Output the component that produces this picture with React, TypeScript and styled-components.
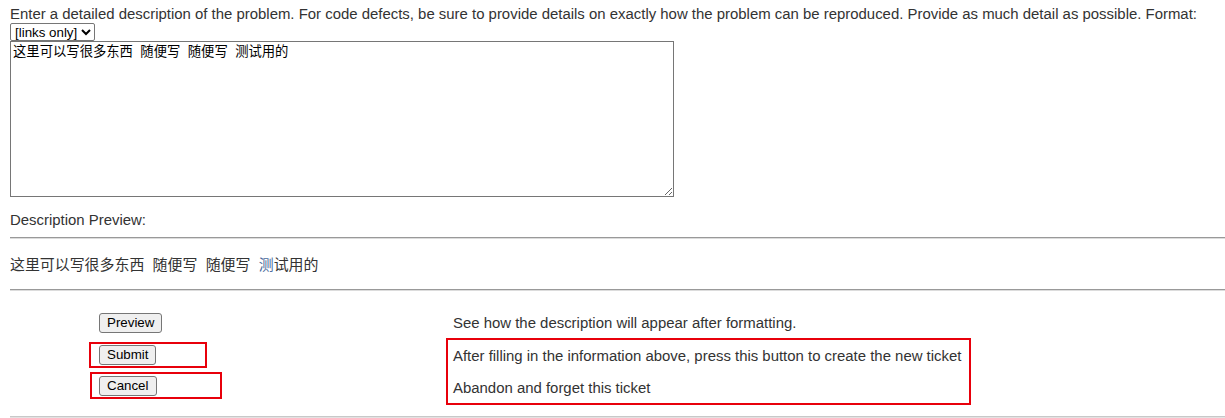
import React from 'react';
import styled, { createGlobalStyle } from 'styled-components';

const GlobalStyle = createGlobalStyle`
  html, body {
    margin: 0;
    padding: 0;
    background: #fff;
  }
  body {
    font-family: 'Liberation Sans', Arial, 'Noto Sans CJK SC', sans-serif;
    color: #333;
    font-size: 14.93px;
  }
`;

const Page = styled.div`
  padding: 5px 0 0 10px;
`;

const Intro = styled.div`
  line-height: 18px;
  white-space: nowrap;
`;

const FormatSelect = styled.select`
  display: block;
  height: 18px;
  font-family: 'Liberation Sans', Arial, sans-serif;
  font-size: 13.33px;
  color: #000;
  padding: 0;
  border: 1px solid #767676;
  border-radius: 2px;
  background: #fff;
`;

const DescriptionArea = styled.textarea`
  display: block;
  box-sizing: border-box;
  width: 664px;
  height: 156px;
  margin: 0;
  padding: 2px 2px;
  font-family: 'Liberation Sans', Arial, 'Noto Sans CJK SC', sans-serif;
  font-size: 13.33px;
  line-height: 16px;
  color: #000;
  border: 1px solid #767676;
  resize: both;
`;

const Label = styled.div`
  margin-top: 14px;
  margin-bottom: 8px;
  line-height: 18px;
`;

const Rule = styled.div<{ $light?: boolean }>`
  height: 0;
  border-top: 1px solid ${(p) => (p.$light ? '#c8c8c8' : '#999')};
  border-bottom: 1px solid ${(p) => (p.$light ? '#e2e2e2' : '#dcdcdc')};
`;

const PreviewText = styled.div`
  padding: 17px 0 15px;
  line-height: 18px;
`;

const Tinted = styled.span`
  color: #4a6a9c;
`;

const Actions = styled.div`
  display: grid;
  grid-template-columns: 436px auto;
  padding-top: 15px;
  padding-bottom: 11px;
`;

const ButtonCol = styled.div`
  display: flex;
  flex-direction: column;
`;

const InfoCol = styled.div`
  display: flex;
  flex-direction: column;
`;

const PlainCell = styled.div`
  height: 33px;
  display: flex;
  align-items: center;
  padding-left: 89px;
`;

const Marked = styled.div<{ $width: number; $height: number; $shift: number; $top: number }>`
  box-sizing: border-box;
  width: ${(p) => p.$width}px;
  height: ${(p) => p.$height}px;
  margin-left: ${(p) => p.$shift}px;
  margin-top: ${(p) => p.$top}px;
  border: 2px solid #e8000b;
  display: flex;
  align-items: center;
  padding-left: ${(p) => 87 - p.$shift}px;
`;

const Button = styled.button`
  font-family: 'Liberation Sans', Arial, sans-serif;
  font-size: 13.33px;
  color: #000;
  height: 20px;
  padding: 0 7px;
  background: #efefef;
  border: 1px solid #767676;
  border-radius: 3px;
  line-height: 16px;
`;

const InfoLine = styled.div`
  height: 33px;
  display: flex;
  align-items: center;
  padding-left: 7px;
`;

const InfoBox = styled.div`
  box-sizing: border-box;
  width: 525px;
  height: 67px;
  margin-top: -1px;
  border: 2px solid #e8000b;
  display: flex;
  flex-direction: column;
  justify-content: center;
  padding-left: 5px;
`;

const BoxLine = styled.div`
  height: 33px;
  display: flex;
  align-items: center;
`;

export default function App() {
  return (
    <Page>
      <GlobalStyle />
      <Intro>
        Enter a detailed description of the problem. For code defects, be sure to provide details on exactly how the
        problem can be reproduced. Provide as much detail as possible. Format:
      </Intro>
      <FormatSelect defaultValue="links">
        <option value="links">[links only]</option>
        <option value="wiki">wiki</option>
      </FormatSelect>
      <DescriptionArea defaultValue="这里可以写很多东西  随便写  随便写  测试用的" />
      <Label>Description Preview:</Label>
      <Rule />
      <PreviewText>
        这里可以写很多东西&nbsp;&nbsp;随便写&nbsp;&nbsp;随便写&nbsp;&nbsp;<Tinted>测</Tinted>试用的
      </PreviewText>
      <Rule />
      <Actions>
        <ButtonCol>
          <PlainCell>
            <Button>Preview</Button>
          </PlainCell>
          <Marked $width={118} $height={26} $shift={79} $top={3}>
            <Button>Submit</Button>
          </Marked>
          <Marked $width={132} $height={27} $shift={80} $top={4}>
            <Button>Cancel</Button>
          </Marked>
        </ButtonCol>
        <InfoCol>
          <InfoLine>See how the description will appear after formatting.</InfoLine>
          <InfoBox>
            <BoxLine>After filling in the information above, press this button to create the new ticket</BoxLine>
            <BoxLine>Abandon and forget this ticket</BoxLine>
          </InfoBox>
        </InfoCol>
      </Actions>
      <Rule $light />
    </Page>
  );
}
